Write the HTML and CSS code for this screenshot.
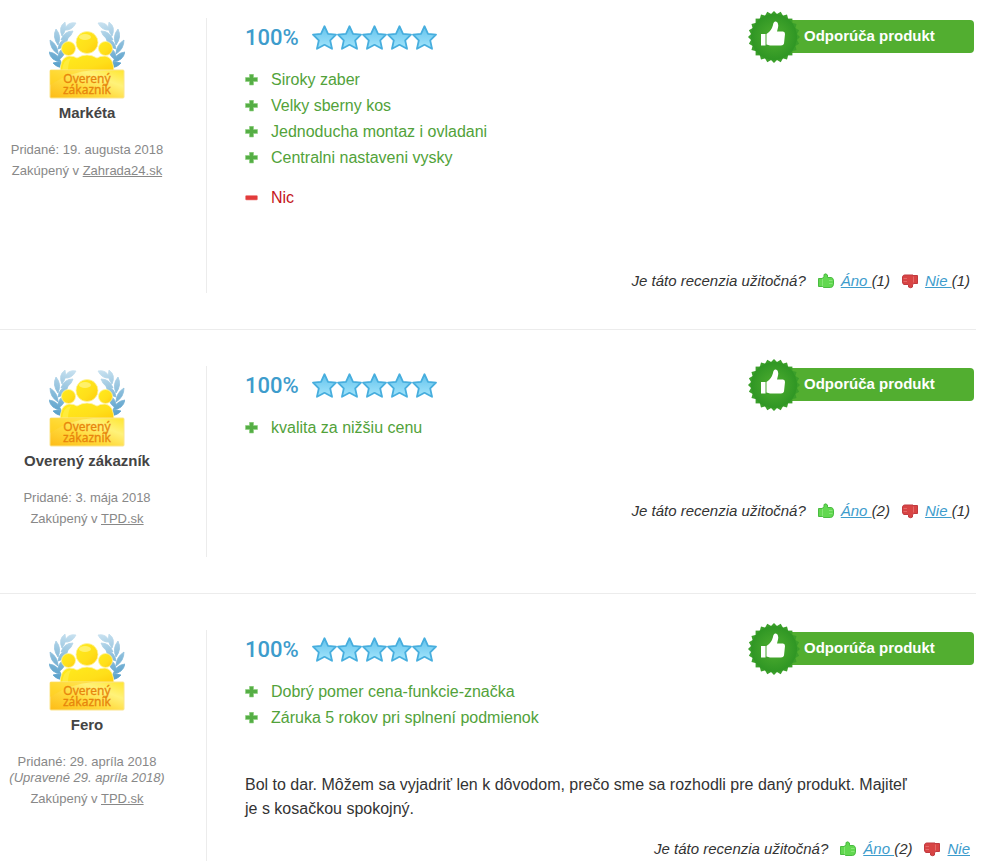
FILE: index.html
```html
<!DOCTYPE html>
<html lang="sk">
<head>
<meta charset="utf-8">
<title>Recenzie produktu</title>
<link rel="stylesheet" href="styles.css">
</head>
<body>
<svg class="defs" aria-hidden="true">
  <defs>
    <linearGradient id="gold" x1="0" y1="0" x2="1" y2="1"><stop offset="0" stop-color="#ffec1c"/><stop offset=".6" stop-color="#ffdf1a"/><stop offset="1" stop-color="#ffcb0a"/></linearGradient>
    <linearGradient id="plate" x1="0" y1="1" x2="1" y2="0"><stop offset="0" stop-color="#fdbb16"/><stop offset=".4" stop-color="#ffd93b"/><stop offset=".7" stop-color="#fff27a"/><stop offset="1" stop-color="#ffe62f"/></linearGradient>
    <linearGradient id="leafblue" gradientUnits="userSpaceOnUse" x1="20" y1="1" x2="6" y2="46"><stop offset="0" stop-color="#c6e0ef"/><stop offset="1" stop-color="#579fca"/></linearGradient>
    <linearGradient id="starblue" x1="0" y1="0" x2="0" y2="1"><stop offset="0" stop-color="#63c2ec"/><stop offset="1" stop-color="#a4e6fc"/></linearGradient>
    <radialGradient id="sealgreen"><stop offset="0" stop-color="#4fae30"/><stop offset="1" stop-color="#2f9624"/></radialGradient>
    <g id="laurel" fill="url(#leafblue)" stroke="url(#leafblue)" stroke-width=".8" stroke-linejoin="round">
      <path d="M27 2Q19 0 15 9Q23 10 27 2Z"/>
      <path d="M16 1Q9 6 13 15Q18 9 16 1Z"/>
      <path d="M24 10Q15 10 12 19Q21 19 24 10Z"/>
      <path d="M7 8Q3 16 9 24Q13 15 7 8Z"/>
      <path d="M19 17Q10 19 9 28Q17 26 19 17Z"/>
      <path d="M1 19Q1 28 9 33Q9 24 1 19Z"/>
      <path d="M16 26Q8 30 9 39Q17 35 16 26Z"/>
      <path d="M0 31Q2 40 12 41Q9 32 0 31Z"/>
      <path d="M4 42Q9 48 18 46Q13 39 4 42Z"/>
    </g>
    <symbol id="verified" viewBox="0 0 76 80">
      <use href="#laurel"/>
      <use href="#laurel" transform="matrix(-1 0 0 1 76 0)"/>
      <path fill="url(#gold)" stroke="#fff3a0" stroke-width=".8" d="M11 52Q11 36 20 35Q25 35 28 37Q33 34 38 34Q43 34 48 37Q51 35 56 35Q65 36 65 52Z"/>
      <path fill="#fff04a" opacity=".7" d="M13 50Q14 38 22 37Q19 42 19 50Z"/>
      <g fill="url(#gold)" stroke="#fff3a0" stroke-width=".8">
        <circle cx="19.500" cy="27.500" r="7"/>
        <circle cx="56.500" cy="27.500" r="7"/>
        <circle cx="38" cy="21.500" r="11"/>
      </g>
      <ellipse cx="36" cy="16" rx="6" ry="3" fill="#fff9a0" opacity=".6"/>
      <rect x="1" y="49" width="74" height="28" rx="1" fill="url(#plate)" stroke="#fbe48b" stroke-width="1"/>
      <path d="M1 77V64Q20 51 44 49H1Z" fill="#ffd21c" opacity=".5"/>
      <g class="verified-text">
        <text x="38" y="62">Overený</text>
        <text x="38" y="73">zákazník</text>
      </g>
    </symbol>
    <symbol id="stars" viewBox="0 0 125 25">
      <g fill="url(#starblue)" stroke="#47aede" stroke-width="1.8" stroke-linejoin="round">
        <path id="star" d="M12.5 1.200L16 8.800L24 9.600L18.200 15.400L20 23.800L12.500 19.800L5 23.800L6.800 15.400L1 9.600L9 8.800Z"/>
        <use href="#star" x="25"/><use href="#star" x="50"/><use href="#star" x="75"/><use href="#star" x="100"/>
      </g>
    </symbol>
    <symbol id="seal" viewBox="0 0 52 52">
      <g fill="#3b9f2a">
        <rect id="tooth" x="7.600" y="7.600" width="36.800" height="36.800"/>
        <use href="#tooth" transform="rotate(15 26 26)"/>
        <use href="#tooth" transform="rotate(30 26 26)"/>
        <use href="#tooth" transform="rotate(45 26 26)"/>
        <use href="#tooth" transform="rotate(60 26 26)"/>
        <use href="#tooth" transform="rotate(75 26 26)"/>
      </g>
      <circle cx="26" cy="26" r="23" fill="url(#sealgreen)"/>
      <path fill="#fff" d="M13 23H17.500V34.500H13ZM18.500 23Q23.500 20 25 14Q25.500 10 28 10.500Q31 11.500 30 16.500L29 20.500H35Q37 20.500 37 23L36 32.500Q35.500 34.500 33 34.500H22L18.500 33.500Z"/>
    </symbol>
    <symbol id="plus" viewBox="0 1 13 13"><path fill="#55ae45" stroke="#8fd07f" stroke-width=".6" d="M4.500 1.300H8.500V4.500H12.500V8.500H8.500V12H4.500V8.500H.5V4.500H4.500Z"/></symbol>
    <symbol id="minus" viewBox="0 1 13 13"><rect x=".5" y="4.500" width="12" height="4.500" rx="1" fill="#e23b3b" stroke="#f08c8c" stroke-width=".6"/></symbol>
    <symbol id="thumb-up" viewBox="0 0 16 16"><path fill="#62d850" stroke="#4abb41" stroke-width="1" d="M.5 5.500H4L6 4V1.500Q8 0 9.500 2V4.500H13.500Q15.500 5 15.500 8V11.500Q15 14.500 12.500 14.500H5.500L4.500 13.500H.5Z"/><path d="M4.500 6V13M11 7.500H14.500M11 10.500H14.500" stroke="#86e676" fill="none"/></symbol>
    <symbol id="thumb-down" viewBox="0 0 16 16"><path fill="#d84444" stroke="#c03a40" stroke-width="1" d="M.5 4Q1 2 2.500 2H11V2.500H15.500V10.500H12L10.500 11.500V14Q9 15.500 6.500 14V11.500H2Q.5 11 .5 9Z"/><path d="M11.500 3.500V9.500M1.500 5.500H5M1.500 8.500H5" stroke="#e56a6a" fill="none"/></symbol>
  </defs>
</svg>

<main class="reviews">
  <article class="review">
    <aside class="author">
      <svg class="verified" role="img" aria-label="Overený zákazník"><use href="#verified"/></svg>
      <h3 class="name">Markéta</h3>
      <p class="added">Pridané: 19. augusta 2018</p>
      <p class="shop">Zakúpený v <a href="#">Zahrada24.sk</a></p>
    </aside>
    <div class="content">
      <header class="head">
        <span class="percent">100%</span>
        <svg class="stars" role="img" aria-label="5 z 5"><use href="#stars"/></svg>
        <div class="recommend"><svg class="seal" aria-hidden="true"><use href="#seal"/></svg><strong>Odporúča produkt</strong></div>
      </header>
      <ul class="points pros">
        <li><svg class="mark"><use href="#plus"/></svg>Siroky zaber</li>
        <li><svg class="mark"><use href="#plus"/></svg>Velky sberny kos</li>
        <li><svg class="mark"><use href="#plus"/></svg>Jednoducha montaz i ovladani</li>
        <li><svg class="mark"><use href="#plus"/></svg>Centralni nastaveni vysky</li>
      </ul>
      <ul class="points cons">
        <li><svg class="mark"><use href="#minus"/></svg>Nic</li>
      </ul>
      <div class="text"></div>
      <footer class="useful">
        <span>Je táto recenzia užitočná?</span>
        <span class="vote"><svg class="thumb"><use href="#thumb-up"/></svg><span><a href="#">Áno </a>(1)</span></span>
        <span class="vote"><svg class="thumb"><use href="#thumb-down"/></svg><span><a href="#">Nie </a>(1)</span></span>
      </footer>
    </div>
  </article>

  <article class="review">
    <aside class="author">
      <svg class="verified" role="img" aria-label="Overený zákazník"><use href="#verified"/></svg>
      <h3 class="name">Overený zákazník</h3>
      <p class="added">Pridané: 3. mája 2018</p>
      <p class="shop">Zakúpený v <a href="#">TPD.sk</a></p>
    </aside>
    <div class="content">
      <header class="head">
        <span class="percent">100%</span>
        <svg class="stars" role="img" aria-label="5 z 5"><use href="#stars"/></svg>
        <div class="recommend"><svg class="seal" aria-hidden="true"><use href="#seal"/></svg><strong>Odporúča produkt</strong></div>
      </header>
      <ul class="points pros">
        <li><svg class="mark"><use href="#plus"/></svg>kvalita za nižšiu cenu</li>
      </ul>
      <div class="text"></div>
      <footer class="useful">
        <span>Je táto recenzia užitočná?</span>
        <span class="vote"><svg class="thumb"><use href="#thumb-up"/></svg><span><a href="#">Áno </a>(2)</span></span>
        <span class="vote"><svg class="thumb"><use href="#thumb-down"/></svg><span><a href="#">Nie </a>(1)</span></span>
      </footer>
    </div>
  </article>

  <article class="review">
    <aside class="author">
      <svg class="verified" role="img" aria-label="Overený zákazník"><use href="#verified"/></svg>
      <h3 class="name">Fero</h3>
      <p class="added">Pridané: 29. apríla 2018 <em>(Upravené 29. apríla 2018)</em></p>
      <p class="shop">Zakúpený v <a href="#">TPD.sk</a></p>
    </aside>
    <div class="content">
      <header class="head">
        <span class="percent">100%</span>
        <svg class="stars" role="img" aria-label="5 z 5"><use href="#stars"/></svg>
        <div class="recommend"><svg class="seal" aria-hidden="true"><use href="#seal"/></svg><strong>Odporúča produkt</strong></div>
      </header>
      <ul class="points pros">
        <li><svg class="mark"><use href="#plus"/></svg>Dobrý pomer cena-funkcie-značka</li>
        <li><svg class="mark"><use href="#plus"/></svg>Záruka 5 rokov pri splnení podmienok</li>
      </ul>
      <div class="text"><p>Bol to dar. Môžem sa vyjadriť len k dôvodom, prečo sme sa rozhodli pre daný produkt. Majiteľ je s kosačkou spokojný.</p></div>
      <footer class="useful">
        <span>Je táto recenzia užitočná?</span>
        <span class="vote"><svg class="thumb"><use href="#thumb-up"/></svg><span><a href="#">Áno </a>(2)</span></span>
        <span class="vote"><svg class="thumb"><use href="#thumb-down"/></svg><a href="#">Nie</a></span>
      </footer>
    </div>
  </article>
</main>
</body>
</html>
```
FILE: styles.css
```css
* { box-sizing: border-box; }

body {
  margin: 0;
  background: #fff;
  color: #333;
  font: 16px/24px "Liberation Sans", Arial, sans-serif;
}

h3, p, ul { margin: 0; padding: 0; }

svg { display: block; flex: none; }

.defs { position: absolute; width: 0; height: 0; }

.reviews { padding-right: 11px; }

.review {
  display: flex;
  padding: 36px 0;
  border-bottom: 1px solid #ececec;
}

.review:first-child { padding-top: 18px; }
.review:last-child { padding-bottom: 0; border-bottom: 0; }

.author {
  flex: none;
  width: 207px;
  min-height: 191px;
  padding: 3px 32px 0 0;
  border-right: 1px solid #ececec;
  color: #888;
  font-size: 13px;
  line-height: 16px;
  text-align: center;
}

.verified { width: 76px; height: 80px; margin: 0 auto; }

.verified-text {
  fill: #e8850c;
  font: 12px "Noto Sans", sans-serif;
  stroke: #e8850c;
  stroke-width: .3px;
  text-anchor: middle;
}

.name {
  margin-bottom: 17px;
  color: #444;
  font-size: 15px;
  line-height: 24px;
}

.added em { display: block; }
.shop { margin-top: 5px; }
.author a { color: inherit; }

.content {
  flex: 1;
  min-width: 0;
  padding: 0 2px 0 38px;
}

.head {
  display: flex;
  align-items: center;
  height: 36px;
  margin-bottom: 13px;
}

.percent {
  padding-top: 4px;
  color: #3d9ccc;
  font: 500 22px/32px Roboto, sans-serif;
}

.stars { width: 125px; height: 25px; margin: 2px 0 0 13px; }

.recommend {
  position: relative;
  width: 200px;
  margin-left: auto;
  padding: 0 0 2px 30px;
  border-radius: 4px;
  background: #52ae30;
  color: #fff;
  font-size: 15px;
  line-height: 31px;
}

.seal {
  position: absolute;
  top: -9px;
  left: -26px;
  width: 52px;
  height: 52px;
}

.points { list-style: none; }

.points li {
  display: flex;
  align-items: center;
  gap: 13px;
  line-height: 26px;
}

.pros { color: #52a23a; }
.cons { margin-top: 14px; color: #c4161c; }

.mark { width: 13px; height: 13px; }

.text { padding: 42px 56px 16px 0; }

.useful {
  display: flex;
  justify-content: flex-end;
  gap: 12px;
  padding-right: 4px;
  font-size: 15px;
  font-style: italic;
}

.vote { display: flex; align-items: center; gap: 7px; }
.vote a { color: #3d9ccc; }
.thumb { width: 16px; height: 16px; }
```
